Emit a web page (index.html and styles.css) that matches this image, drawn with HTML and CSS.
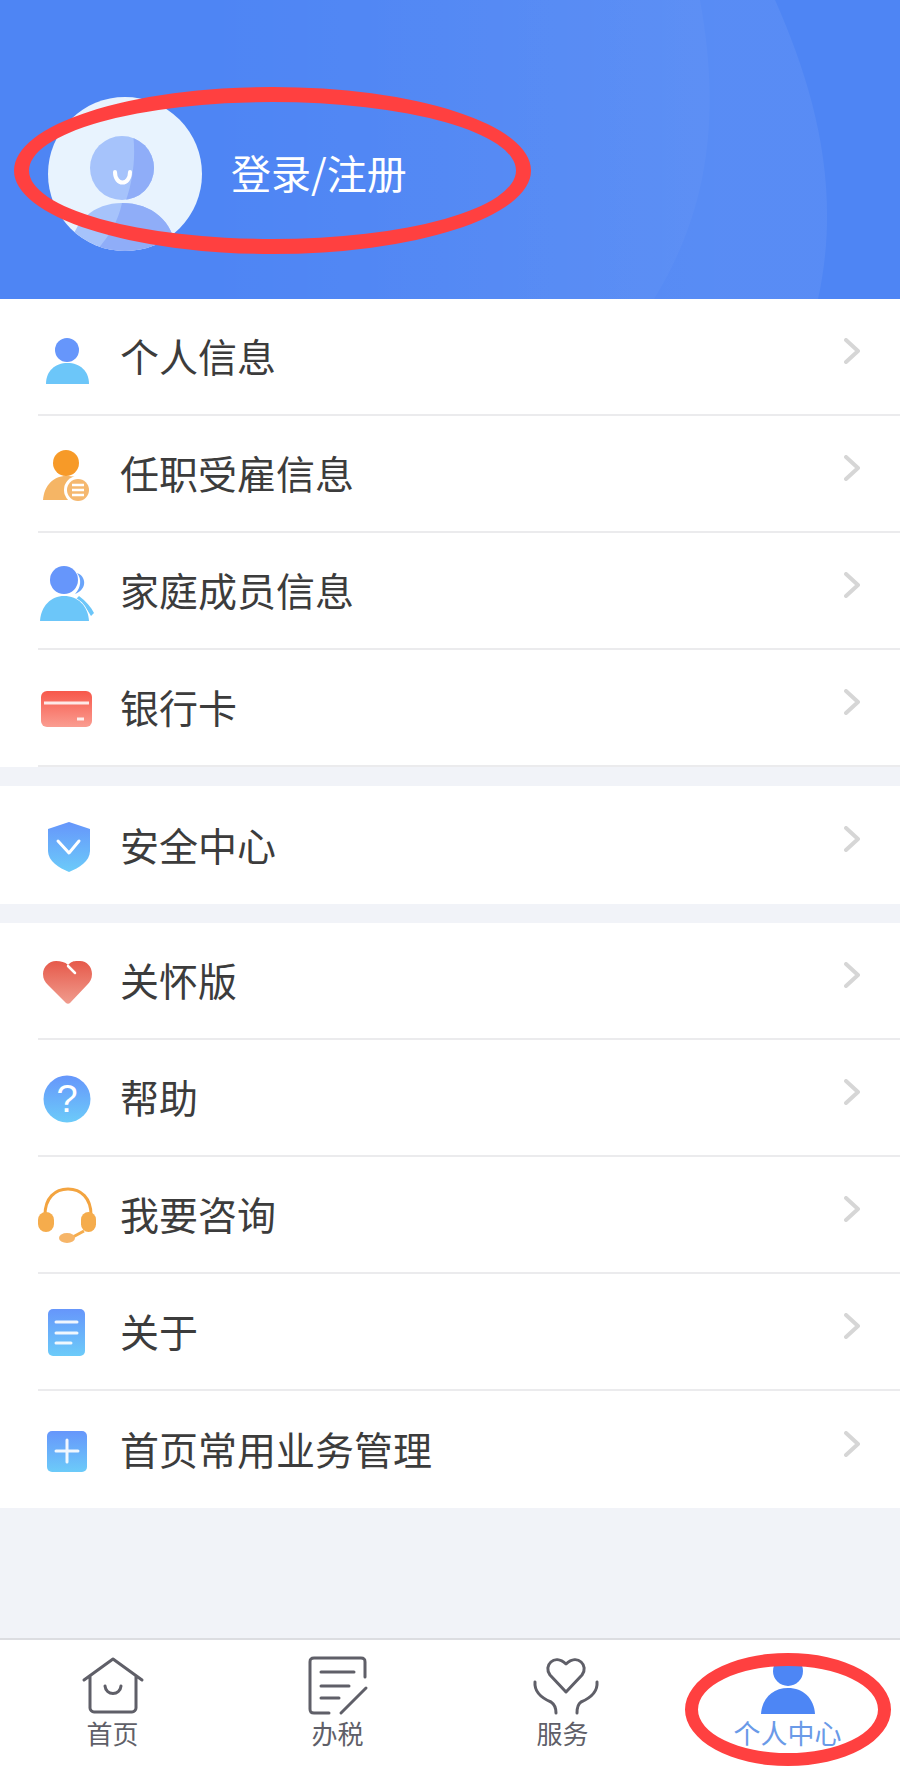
FILE: index.html
```html
<!DOCTYPE html>
<html lang="zh-CN">
<head>
    <meta charset="UTF-8">
    <meta name="viewport" content="width=device-width, initial-scale=1.0">
    <title>个人中心</title>
    <link rel="stylesheet" href="styles.css">
</head>
<body>
    <!-- shared gradients for the menu icons -->
    <svg class="defs" aria-hidden="true">
        <defs>
            <linearGradient id="blue" x1="0" y1="0" x2="0" y2="1"><stop offset="0" stop-color="#6696fb"/><stop offset="1" stop-color="#6ccbf9"/></linearGradient>
            <linearGradient id="red" x1="0" y1="0" x2="0" y2="1"><stop offset="0" stop-color="#f7584b"/><stop offset="1" stop-color="#fa9d91"/></linearGradient>
            <linearGradient id="heart" x1="0" y1="0" x2="0" y2="1"><stop offset="0" stop-color="#e6594a"/><stop offset="1" stop-color="#f09c8e"/></linearGradient>
            <clipPath id="avatarClip"><circle cx="77" cy="77" r="77"/></clipPath>
            <clipPath id="faceClip"><circle cx="74" cy="71" r="32"/></clipPath>
        </defs>
    </svg>

    <main class="content">
        <header class="profile">
            <svg class="profile-bg" viewBox="0 0 900 299" aria-hidden="true">
                <defs>
                    <linearGradient id="wash" gradientUnits="userSpaceOnUse" x1="200" y1="0" x2="720" y2="0"><stop offset="0" stop-color="#fff" stop-opacity="0"/><stop offset="1" stop-color="#fff" stop-opacity=".06"/></linearGradient>
                    <linearGradient id="wash2" gradientUnits="userSpaceOnUse" x1="350" y1="0" x2="712" y2="0"><stop offset="0" stop-color="#fff" stop-opacity="0"/><stop offset="1" stop-color="#fff" stop-opacity=".03"/></linearGradient>
                </defs>
                <path d="M0 0H775C815 90 842 190 818 299H0Z" fill="url(#wash)"/>
                <path d="M0 0H700C718 100 715 200 654 299H0Z" fill="url(#wash2)"/>
            </svg>
            <svg class="avatar" viewBox="0 0 154 154" aria-hidden="true">
                <circle cx="77" cy="77" r="77" fill="#e8f3fe"/>
                <circle cx="74" cy="71" r="32" fill="#a6c3fb"/>
                <path d="M85 36C88 60 85 85 77 106H110V36Z" fill="#8fadf8" clip-path="url(#faceClip)"/>
                <g clip-path="url(#avatarClip)">
                    <path d="M22 158C22 126 45 106 74 106C105 106 128 126 128 158Z" fill="#a6c3fb"/>
                    <path d="M74 106C105 106 128 126 128 158H44C60 142 70 125 74 106Z" fill="#8fadf8"/>
                </g>
                <path d="M67 75C67 89 82 89 82 75" fill="none" stroke="#fff" stroke-width="4" stroke-linecap="round"/>
            </svg>
            <span class="profile-name">登录/注册</span>
            <div class="ring ring-profile"></div>
        </header>

        <section class="group">
            <a class="row">
                <svg class="row-icon" viewBox="0 0 60 60"><circle cx="29" cy="23" r="12" fill="#6696fb"/><path d="M8 57C8 44 17 36 29.500 36C42 36 51 44 51 57Z" fill="#6cc6f9"/></svg>
                <span class="row-label">个人信息</span>
                <svg class="chevron" viewBox="0 0 16 26"><path d="M2 2L14 13L2 24"/></svg>
            </a>
            <a class="row">
                <svg class="row-icon" viewBox="0 0 60 60"><circle cx="28" cy="19" r="13" fill="#f79a28"/><path d="M5 56C6 42 15 32 28 32C35 32 40 33 43 36L30 56Z" fill="#f5b565"/><circle cx="40" cy="46" r="14" fill="#fff"/><circle cx="40" cy="46" r="11" fill="#f5b86f"/><path d="M34 41H46M34 46H46M34 51H46" stroke="#fff" stroke-width="2.500"/></svg>
                <span class="row-label">任职受雇信息</span>
                <svg class="chevron" viewBox="0 0 16 26"><path d="M2 2L14 13L2 24"/></svg>
            </a>
            <a class="row">
                <svg class="row-icon" viewBox="0 0 60 60"><path d="M39 12C48 15 50 28 37 33C43 27 44 18 39 12Z" fill="#6aa4fa"/><path d="M41 35C48 40 53 46 56 52L53 55C49 48 45 43 38 38Z" fill="#6cc6f9"/><circle cx="26" cy="19" r="14" fill="#6696fb"/><path d="M2 60C3 45 13 35 26 35C40 35 50 45 51 60Z" fill="#6cc6f9" stroke="#fff" stroke-width="1.500" paint-order="stroke"/></svg>
                <span class="row-label">家庭成员信息</span>
                <svg class="chevron" viewBox="0 0 16 26"><path d="M2 2L14 13L2 24"/></svg>
            </a>
            <a class="row">
                <svg class="row-icon" viewBox="0 0 60 60"><rect x="3" y="13" width="51" height="36" rx="6" fill="url(#red)"/><path d="M6 25H51M39 41H46" stroke="#fff" stroke-width="3" opacity=".85"/></svg>
                <span class="row-label">银行卡</span>
                <svg class="chevron" viewBox="0 0 16 26"><path d="M2 2L14 13L2 24"/></svg>
            </a>
        </section>

        <section class="group group-single">
            <a class="row row-plain">
                <svg class="row-icon" viewBox="0 0 60 60"><path d="M31 7L52 14V36C52 46 41 53 31 57C21 53 10 46 10 36V14Z" fill="url(#blue)"/><path d="M20 26L31 38L41 26" fill="none" stroke="#fff" stroke-width="3" stroke-linecap="round" stroke-linejoin="round"/></svg>
                <span class="row-label">安全中心</span>
                <svg class="chevron" viewBox="0 0 16 26"><path d="M2 2L14 13L2 24"/></svg>
            </a>
        </section>

        <section class="group">
            <a class="row">
                <svg class="row-icon" viewBox="0 0 60 60"><path d="M30 14C34 9 39 10 42 10C49 10 54 16 54 23C54 28 52 31 49 34L32 52C31 53 29 53 28 52L10 34C7 31 5 28 5 23C5 16 11 10 18 10C23 10 27 11 30 14Z" fill="url(#heart)"/><path d="M30 15L37 22" stroke="#fff" stroke-width="2.500" stroke-linecap="round"/></svg>
                <span class="row-label">关怀版</span>
                <svg class="chevron" viewBox="0 0 16 26"><path d="M2 2L14 13L2 24"/></svg>
            </a>
            <a class="row">
                <svg class="row-icon" viewBox="0 0 60 60"><circle cx="29" cy="31" r="23.500" fill="url(#blue)"/><text class="help-mark" x="29" y="44" text-anchor="middle">?</text></svg>
                <span class="row-label">帮助</span>
                <svg class="chevron" viewBox="0 0 16 26"><path d="M2 2L14 13L2 24"/></svg>
            </a>
            <a class="row">
                <svg class="row-icon" viewBox="0 0 60 60"><path d="M7 30C7 13 17 4 30 4C43 4 53 13 53 30" fill="none" stroke="#f3a440" stroke-width="3"/><rect x="0" y="27" width="16" height="20" rx="8" fill="#f5ac4c"/><rect x="43" y="27" width="15" height="20" rx="7.500" fill="#f5ac4c"/><path d="M46 46L33 53" stroke="#f5ac4c" stroke-width="3"/><ellipse cx="29" cy="53" rx="8" ry="5" fill="#f6b568"/></svg>
                <span class="row-label">我要咨询</span>
                <svg class="chevron" viewBox="0 0 16 26"><path d="M2 2L14 13L2 24"/></svg>
            </a>
            <a class="row">
                <svg class="row-icon" viewBox="0 0 60 60"><rect x="10" y="7" width="37" height="47" rx="5" fill="url(#blue)"/><path d="M18 20H39M18 31H39M18 41H33" stroke="#fff" stroke-width="3" stroke-linecap="round" opacity=".9"/></svg>
                <span class="row-label">关于</span>
                <svg class="chevron" viewBox="0 0 16 26"><path d="M2 2L14 13L2 24"/></svg>
            </a>
            <a class="row row-plain">
                <svg class="row-icon" viewBox="0 0 60 60"><rect x="9" y="11" width="40" height="41" rx="5" fill="url(#blue)"/><path d="M18 31H40M29 20V42" stroke="#fff" stroke-width="3" stroke-linecap="round" opacity=".9"/></svg>
                <span class="row-label">首页常用业务管理</span>
                <svg class="chevron" viewBox="0 0 16 26"><path d="M2 2L14 13L2 24"/></svg>
            </a>
        </section>
    </main>

    <nav class="tabbar">
        <a class="tab">
            <svg class="tab-icon" viewBox="0 0 64 60"><path d="M3 25L32 4L61 25M9 21V53C9 55 11 57 13 57H51C53 57 55 55 55 53V21M24 31C25 41 39 41 40 31"/></svg>
            <span>首页</span>
        </a>
        <a class="tab">
            <svg class="tab-icon" viewBox="0 0 64 60"><path d="M59 22V7C59 4 58 3 55 3H8C5 3 4 4 4 7V54C4 57 5 58 8 58H23M15 17H48M15 31H43M15 43H33M35 58L60 33"/></svg>
            <span>办税</span>
        </a>
        <a class="tab">
            <svg class="tab-icon" viewBox="0 0 64 60"><path d="M35 37L19 20C12 11 23 -2 35 9C47 -2 58 11 51 20ZM4 27C3 38 13 44 20 47C23 49 25 53 25 58M66 27C67 38 57 44 50 47C47 49 46 53 46 58"/></svg>
            <span>服务</span>
        </a>
        <a class="tab tab-active">
            <svg class="tab-icon" viewBox="0 0 64 60"><circle cx="32" cy="16" r="15"/><path d="M5 59C6 43 17 33 32 33C47 33 58 43 59 59Z"/></svg>
            <span class="tab-label-active">个人中心</span>
        </a>
        <div class="ring ring-tab"></div>
    </nav>
</body>
</html>
```

FILE: styles.css
```css
html, body {
    margin: 0;
    height: 100%;
}
body {
    display: flex;
    flex-direction: column;
    height: 1772px;
    overflow: hidden;
    background-color: #f1f3f8;
    font-family: "Noto Sans CJK SC", "Noto Sans", sans-serif;
}
.defs {
    display: block;
    width: 0;
    height: 0;
}
.content {
    flex: 1;
}

/* top banner */
.profile {
    position: relative;
    display: flex;
    align-items: flex-start;
    height: 299px;
    box-sizing: border-box;
    padding: 97px 0 0 48px;
    background-color: #4e85f4;
}
.profile-bg {
    position: absolute;
    top: 0;
    left: 0;
    width: 900px;
    height: 299px;
}
.avatar {
    position: relative;
    width: 154px;
    height: 154px;
}
.profile-name {
    position: relative;
    margin: 47px 0 0 29px;
    font-size: 40px;
    line-height: 56px;
    font-weight: 400;
    color: #fff;
}

/* red marker rings drawn over the screenshot */
.ring {
    position: absolute;
    box-sizing: border-box;
    border-style: solid;
    border-color: #ff4040;
    border-radius: 50%;
}
.ring-profile {
    top: 87px;
    left: 14px;
    width: 517px;
    height: 167px;
    border-width: 15px;
}
.ring-tab {
    top: 13px;
    left: 685px;
    width: 206px;
    height: 113px;
    border-width: 13px;
}

/* menu */
.group {
    background-color: #fff;
    margin-bottom: 19px;
}
.group-single .row {
    height: 118px;
}
.row {
    display: flex;
    align-items: center;
    height: 117px;
    box-sizing: border-box;
    margin-left: 38px;
    padding-right: 40px;
    border-bottom: 2px solid #ebebed;
}
.row-plain {
    border-bottom: none;
}
.row-icon {
    flex: none;
    width: 60px;
    height: 60px;
    margin-right: 22px;
    overflow: visible;
}
.row-label {
    margin-bottom: 3px;
    font-size: 39px;
    color: #3c3c3c;
}
.help-mark {
    font-family: "Liberation Sans", sans-serif;
    font-size: 38px;
    fill: #fff;
}
.chevron {
    width: 16px;
    height: 26px;
    margin-left: auto;
    margin-bottom: 12px;
    fill: none;
    stroke: #d6d6d6;
    stroke-width: 4;
    stroke-linecap: round;
    stroke-linejoin: round;
}

/* bottom tabs */
.tabbar {
    position: relative;
    display: grid;
    grid-template-columns: repeat(4, 1fr);
    flex: none;
    height: 134px;
    box-sizing: border-box;
    border-top: 2px solid #dcdde1;
    background-color: #fff;
}
.tab {
    display: flex;
    flex-direction: column;
    align-items: center;
    padding-top: 15px;
    font-size: 26px;
    line-height: 36px;
    color: #5f5f68;
}
.tab-icon {
    width: 64px;
    height: 60px;
    margin-bottom: 0;
    overflow: visible;
    fill: none;
    stroke: #5f5f68;
    stroke-width: 3;
    stroke-linecap: round;
    stroke-linejoin: round;
}
.tab-active {
    color: #6a9ae8;
}
.tab-label-active {
    font-size: 27px;
}
.tab-active .tab-icon {
    fill: #4d86f5;
    stroke: none;
}
```
